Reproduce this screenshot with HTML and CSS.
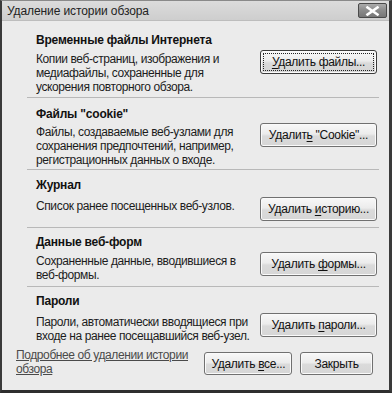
FILE: index.html
```html
<!DOCTYPE html>
<html lang="ru">
<head>
<meta charset="utf-8">
<title>Удаление истории обзора</title>
<link rel="stylesheet" href="styles.css">
</head>
<body>
<div class="window">
  <div class="titlebar">
    <span class="title">Удаление истории обзора</span>
    <div class="close">
      <svg width="15" height="10" viewBox="0 0 15 10"><path d="M2.5 1.5 L12.5 8.5 M12.5 1.5 L2.5 8.5" stroke="#ffffff" stroke-width="2.6" stroke-linecap="square"/></svg>
    </div>
  </div>
  <div class="content">
    <div class="section s1">
      <div class="head">Временные файлы Интернета</div>
      <div class="desc">Копии веб-страниц, изображения и медиафайлы, сохраненные для ускорения повторного обзора.</div>
      <button class="btn btn-wide btn-default"><span class="focus"><span><u>У</u>далить файлы...</span></span></button>
    </div>
    <div class="section s2">
      <div class="head">Файлы "cookie"</div>
      <div class="desc">Файлы, создаваемые веб-узлами для сохранения предпочтений, например, регистрационных данных о входе.</div>
      <button class="btn btn-wide"><span>Удалит<u>ь</u> "Cookie"...</span></button>
    </div>
    <div class="section s3">
      <div class="head">Журнал</div>
      <div class="desc">Список ранее посещенных веб-узлов.</div>
      <button class="btn btn-wide"><span>Удалить <u>и</u>сторию...</span></button>
    </div>
    <div class="section s4">
      <div class="head">Данные веб-форм</div>
      <div class="desc">Сохраненные данные, вводившиеся в веб-формы.</div>
      <button class="btn btn-wide"><span>Удалить <u>ф</u>ормы...</span></button>
    </div>
    <div class="section s5">
      <div class="head">Пароли</div>
      <div class="desc">Пароли, автоматически вводящиеся при входе на ранее посещавшийся веб-узел.</div>
      <button class="btn btn-wide"><span>Удалить <u>п</u>ароли...</span></button>
    </div>
  </div>
  <div class="footer">
    <a class="link" href="#">Подробнее об удалении истории обзора</a>
    <button class="btn btn-all"><span>Удалить <u>в</u>се...</span></button>
    <button class="btn btn-close"><span>Закрыть</span></button>
  </div>
</div>
</body>
</html>
```

FILE: styles.css
```css
* { box-sizing: border-box; }
html, body { margin: 0; padding: 0; background: #ebebeb; }
body {
  font-family: "Liberation Sans", Arial, sans-serif;
  font-size: 12px;
  letter-spacing: -0.4px;
  color: #161616;
}
.window {
  width: 392px;
  height: 393px;
  background: #ebebeb;
  border-top: 1px solid #8a8a8a;
  border-left: 2px solid #3a3a3a;
  border-right: 3px solid #3a3a3a;
  border-bottom: 3px solid #2e2e2e;
  display: flex;
  flex-direction: column;
}
.titlebar {
  height: 20px;
  display: flex;
  align-items: center;
  justify-content: space-between;
  padding: 0 2px 0 5px;
  background: linear-gradient(#dcdcdc, #cecece);
  border-bottom: 1px solid #bdbdbd;
}
.title {
  font-size: 12px;
  letter-spacing: -0.1px;
  color: #222;
}
.close {
  width: 29px;
  height: 15px;
  border: 1px solid #4a4a4a;
  border-radius: 2px;
  background-color: #858585;
  background-image: linear-gradient(#ababab, #8a8a8a 50%, #767676);
  display: flex;
  align-items: center;
  justify-content: center;
}
.close svg { display: block; }
.content {
  margin: 0 10px 0 25px;
}
.section {
  display: grid;
  grid-template-columns: 1fr 117px;
  column-gap: 8px;
  align-items: start;
  padding-left: 9px;
  padding-right: 2px;
  border-bottom: 1px solid #b8b8b8;
}
.s1 { height: 77px; padding-top: 12px; }
.s2 { height: 72px; padding-top: 9px; }
.s3 { height: 58px; padding-top: 8px; }
.s4 { height: 59px; padding-top: 7px; }
.s5 { height: 61px; padding-top: 7px; border-bottom: none; }
.head {
  grid-column: 1 / -1;
  font-weight: bold;
  letter-spacing: -0.2px;
  line-height: 15px;
  color: #111;
}
.desc {
  line-height: 14px;
  color: #1c1c1c;
}
.btn {
  font-family: "Liberation Sans", Arial, sans-serif;
  font-size: 12px;
  letter-spacing: -0.3px;
  color: #111;
  height: 24px;
  padding: 0;
  border: 1px solid #707070;
  border-radius: 3px;
  background: linear-gradient(#f8f8f8, #ececec 45%, #dadada 55%, #d6d6d6);
  display: flex;
  align-items: center;
  justify-content: center;
  box-shadow: inset 0 0 0 1px #fafafa;
}
.btn u { text-decoration: underline; text-underline-offset: 2px; }
.btn-wide { width: 117px; margin-top: -2px; }
.btn-default {
  border-color: #3c3c3c;
}
.focus {
  display: flex;
  align-items: center;
  justify-content: center;
  width: 109px;
  height: 16px;
  outline: 1px dotted #222;
}
.footer {
  display: flex;
  align-items: flex-start;
  padding: 0 16px 0 14px;
}
.link {
  width: 189px;
  line-height: 14px;
  color: #4a4a4a;
  text-decoration: underline;
  text-underline-offset: 1px;
}
.btn-all { width: 88px; height: 23px; margin-top: 4px; }
.btn-close { width: 73px; height: 23px; margin-top: 4px; margin-left: 8px; }
```
